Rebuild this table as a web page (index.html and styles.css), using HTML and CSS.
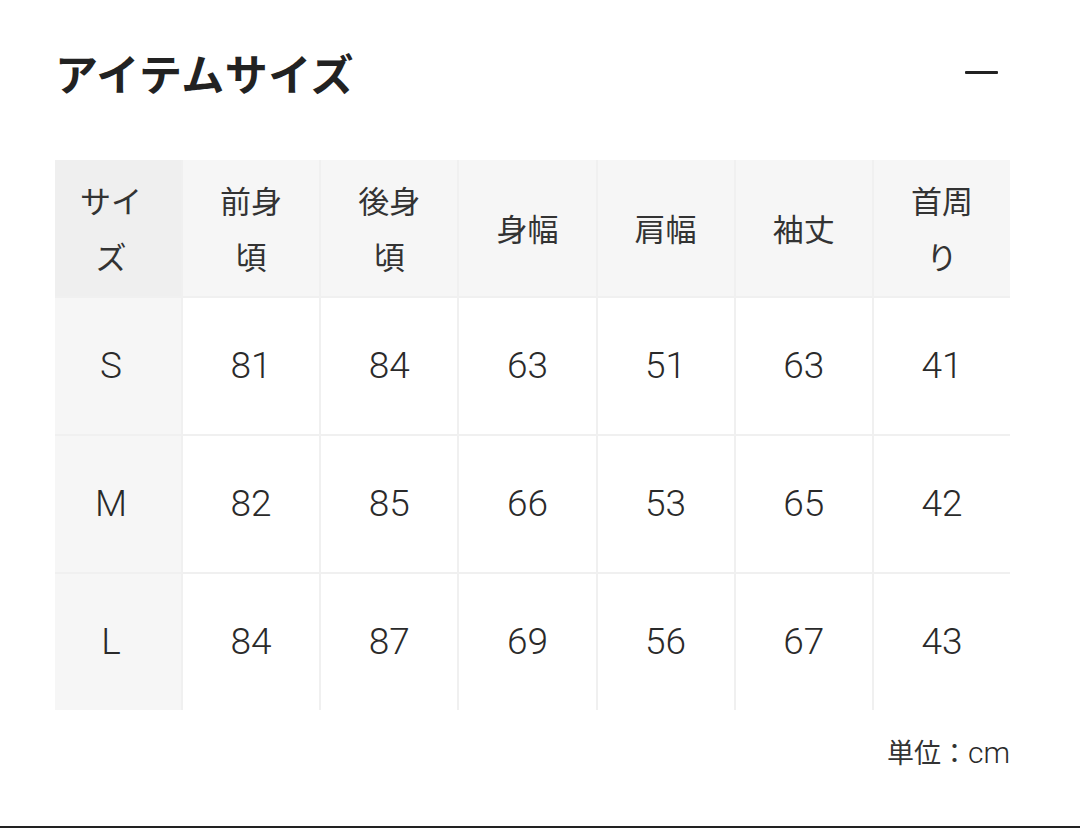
FILE: index.html
```html
<!DOCTYPE html>
<html lang="ja">
<head>
<meta charset="utf-8">
<title>アイテムサイズ</title>
<link rel="stylesheet" href="styles.css">
</head>
<body>
<div class="page">
  <div class="head">
    <h2 class="title">アイテムサイズ</h2>
    <span class="minus" aria-label="閉じる"></span>
  </div>
  <div class="table">
    <div class="cell th corner">サイ<br>ズ</div>
    <div class="cell th">前身<br>頃</div>
    <div class="cell th">後身<br>頃</div>
    <div class="cell th">身幅</div>
    <div class="cell th">肩幅</div>
    <div class="cell th">袖丈</div>
    <div class="cell th">首周<br>り</div>

    <div class="cell num rh">S</div>
    <div class="cell num">81</div>
    <div class="cell num">84</div>
    <div class="cell num">63</div>
    <div class="cell num">51</div>
    <div class="cell num">63</div>
    <div class="cell num">41</div>

    <div class="cell num rh">M</div>
    <div class="cell num">82</div>
    <div class="cell num">85</div>
    <div class="cell num">66</div>
    <div class="cell num">53</div>
    <div class="cell num">65</div>
    <div class="cell num">42</div>

    <div class="cell num rh">L</div>
    <div class="cell num">84</div>
    <div class="cell num">87</div>
    <div class="cell num">69</div>
    <div class="cell num">56</div>
    <div class="cell num">67</div>
    <div class="cell num">43</div>
  </div>
  <div class="unit">単位：<span class="latin">cm</span></div>
  <div class="bottom-line"></div>
</div>
</body>
</html>
```

FILE: styles.css
```css
html, body {
  margin: 0;
  padding: 0;
  background: #ffffff;
}
body {
  font-family: "Noto Sans CJK JP", "Noto Sans", sans-serif;
  color: #333333;
}
.page {
  box-sizing: border-box;
  min-height: 828px;
  padding: 0 70px 0 55px;
  display: flex;
  flex-direction: column;
}
.head {
  margin-top: 42px;
  height: 60px;
  display: flex;
  align-items: center;
  justify-content: space-between;
}
.title {
  margin: 0;
  font-size: 43px;
  font-weight: 700;
  line-height: 60px;
  color: #222222;
  letter-spacing: 0.5px;
}
.minus {
  width: 33px;
  height: 3px;
  background: #222222;
  margin-right: 12px;
  border-radius: 1px;
}
.table {
  margin-top: 58px;
  width: 955px;
  display: grid;
  grid-template-columns: 126px repeat(6, 1fr);
  grid-auto-rows: 136px;
  gap: 2px;
  background: #f0f0f0;
}
.cell {
  background: #ffffff;
  display: flex;
  align-items: center;
  justify-content: center;
  text-align: center;
  font-size: 31px;
  line-height: 56px;
  color: #333333;
}
.num {
  font-family: "Roboto", "Liberation Sans", sans-serif;
  font-weight: 300;
  font-size: 37px;
  color: #2a2a2a;
}
.th {
  background: #f6f6f6;
}
.corner {
  background: #efefef;
  padding-right: 14px;
}
.rh {
  background: #f6f6f6;
  padding-right: 14px;
}
.unit {
  margin-top: 24px;
  text-align: right;
  font-size: 27px;
  line-height: 36px;
  color: #333333;
}
.latin {
  font-family: "Roboto", "Liberation Sans", sans-serif;
  font-weight: 300;
  font-size: 30px;
  color: #2a2a2a;
}
.bottom-line {
  margin-top: auto;
  margin-left: -55px;
  margin-right: -70px;
  height: 2px;
  background: #222222;
}
```
